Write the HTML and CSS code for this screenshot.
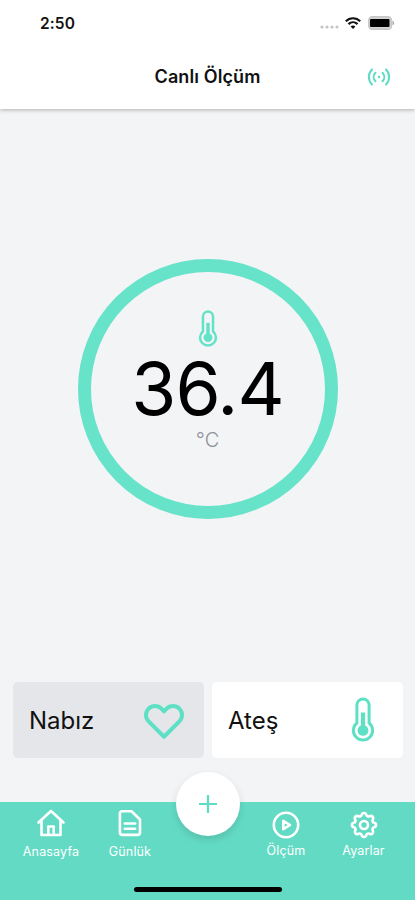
FILE: index.html
```html
<!DOCTYPE html>
<html lang="tr">
<head>
<meta charset="utf-8">
<title>Canlı Ölçüm</title>
<link rel="stylesheet" href="styles.css">
</head>
<body>
<svg width="0" height="0" class="defs">
  <symbol id="thermo" viewBox="0 0 24 46">
    <path d="M5.900 26V8a6.100 6.100 0 0 1 12.200 0v18a9.600 9.600 0 1 1-12.200 0z" fill="none" stroke="currentColor" stroke-width="3"/>
    <path d="M12 15.500v18" fill="none" stroke="currentColor" stroke-width="4.200"/>
    <circle cx="12" cy="33.400" r="5.400" fill="currentColor"/>
  </symbol>
</svg>
<div class="screen">
  <header class="header">
    <div class="status">
      <span class="time">2:50</span>
      <div class="indicators">
        <svg class="dots" width="19" height="4" viewBox="0 0 19 4" fill="#c4c4c4"><circle cx="2" cy="2" r="1.6"/><circle cx="7" cy="2" r="1.6"/><circle cx="12" cy="2" r="1.6"/><circle cx="17" cy="2" r="1.6"/></svg>
        <svg class="wifi" width="16" height="12" viewBox="0 0 16 12" fill="none" stroke="#111" stroke-width="2.200"><path d="M.8 4.300C4.800.200 11.200.200 15.200 4.300M3.500 7.100c2.600-2.500 6.400-2.500 9 0"/><path d="M8 11.900 5.600 9.500c1.400-1.300 3.400-1.300 4.800 0z" fill="#111" stroke="none"/></svg>
        <svg width="27" height="14" viewBox="0 0 27 14"><rect x=".7" y=".7" width="22.800" height="12.600" rx="3.600" fill="#d4d4d4" stroke="#c6c6c6" stroke-width="1.400"/><rect x="2" y="3" width="19.500" height="8" rx="1" fill="#000"/><path d="M24.500 4.700c2.200.7 2.200 3.900 0 4.600z" fill="#aaa"/></svg>
      </div>
    </div>
    <div class="titlebar">
      <h1>Canlı Ölçüm</h1>
      <svg class="live" width="24" height="18" viewBox="0 0 24 18" fill="none" stroke="currentColor" stroke-width="2" stroke-linecap="round"><path d="M5 1.500c-4.200 4.200-4.200 10.800 0 15M8.500 4.800c-2.400 2.400-2.400 6 0 8.400M19 1.500c4.200 4.200 4.200 10.800 0 15M15.500 4.800c2.400 2.400 2.400 6 0 8.400"/><circle cx="12" cy="9" r="1.300" fill="currentColor" stroke="none"/></svg>
    </div>
  </header>
  <main class="main">
    <div class="gauge">
      <svg class="gauge-icon" width="20" height="38"><use href="#thermo"/></svg>
      <div class="value">36.4</div>
      <div class="unit">°C</div>
    </div>
  </main>
  <div class="cards">
    <div class="card selected"><span>Nabız</span>
      <svg class="heart" width="48" height="48" viewBox="0 0 24 24" fill="none" stroke="currentColor" stroke-width="2" stroke-linejoin="round"><path d="M4.318 6.318a4.500 4.500 0 0 0 0 6.364L12 20.364l7.682-7.682a4.500 4.500 0 0 0-6.364-6.364L12 7.636l-1.318-1.318a4.500 4.500 0 0 0-6.364 0z"/></svg>
    </div>
    <div class="card"><span>Ateş</span>
      <svg class="thermo" width="24" height="46"><use href="#thermo"/></svg>
    </div>
  </div>
  <nav class="nav">
    <div class="item home">
      <svg width="30" height="30" viewBox="0 0 30 30"><path d="M2.500 14.500 15 3l12.500 11.500M5.500 12.500V27h19V12.500M12.300 27v-8.500h5.400V27"/></svg>
      <span>Anasayfa</span>
    </div>
    <div class="item diary">
      <svg width="30" height="30" viewBox="0 0 30 30"><path d="M7 3.200h9.500L25 11.500v12.800a2.600 2.600 0 0 1-2.600 2.600H7.500a2.600 2.600 0 0 1-2.600-2.600V5.300A2.100 2.100 0 0 1 7 3.200zM9.800 15.500h10.400M9.800 20.800h10.400"/></svg>
      <span>Günlük</span>
    </div>
    <div class="slot"><button class="fab" aria-label="Ekle"><svg width="20" height="20" viewBox="0 0 20 20" fill="none" stroke="currentColor" stroke-width="2.200"><path d="M10 1v18M1 10h18"/></svg></button></div>
    <div class="item measure">
      <svg width="30" height="30" viewBox="0 0 30 30"><circle cx="15" cy="15" r="12.200"/><path d="M12.300 10.800v8.400l6.700-4.200z"/></svg>
      <span>Ölçüm</span>
    </div>
    <div class="item settings">
      <svg width="32" height="32" viewBox="0 0 24 24"><path class="cog" d="M10.325 4.317c.426-1.756 2.924-1.756 3.350 0a1.724 1.724 0 0 0 2.573 1.066c1.543-.94 3.310.826 2.370 2.370a1.724 1.724 0 0 0 1.065 2.572c1.756.426 1.756 2.924 0 3.350a1.724 1.724 0 0 0-1.066 2.573c.940 1.543-.826 3.310-2.370 2.370a1.724 1.724 0 0 0-2.572 1.065c-.426 1.756-2.924 1.756-3.350 0a1.724 1.724 0 0 0-2.573-1.066c-1.543.940-3.310-.826-2.370-2.370a1.724 1.724 0 0 0-1.065-2.572c-1.756-.426-1.756-2.924 0-3.350a1.724 1.724 0 0 0 1.066-2.573c-.940-1.543.826-3.310 2.370-2.370.996.608 2.296.070 2.572-1.065z"/><circle class="cog" cx="12" cy="12" r="3"/></svg>
      <span>Ayarlar</span>
    </div>
    <div class="indicator"></div>
  </nav>
</div>
</body>
</html>
```
FILE: styles.css
```css
* { box-sizing: border-box; }
body { margin: 0; font-family: Inter, "Liberation Sans", sans-serif; color: #111; }
svg { display: block; flex: none; }
.defs { position: absolute; }
.screen { width: 415px; height: 900px; display: flex; flex-direction: column; background: #f3f4f6; overflow: hidden; }
.header { height: 109px; flex: none; background: #fff; box-shadow: 0 1px 4px rgba(0,0,0,.28); }
.status { height: 46px; padding: 0 20px 0 40px; display: flex; align-items: center; justify-content: space-between; }
.time { font-size: 15.5px; font-weight: 600; letter-spacing: .1px; }
.indicators { display: flex; align-items: center; }
.dots { margin: 8px 6px 0 0; }
.wifi { margin-right: 7px; }
.titlebar { height: 62px; padding: 0 24px; display: grid; grid-template-columns: 24px 1fr 24px; align-items: center; }
h1 { grid-column: 2; margin: 0; text-align: center; font-size: 18px; line-height: 24px; font-weight: 600; letter-spacing: .1px; }
.live { color: #5edbc3; }
.main { height: 572.5px; flex: none; padding-top: 150px; }
.gauge { width: 260px; height: 260px; margin: 0 auto; border: 13px solid #67e3ca; border-radius: 50%; display: flex; flex-direction: column; align-items: center; padding-top: 38px; color: #64e2c8; }
.value { margin-top: 5px; font-size: 73px; line-height: 72px; letter-spacing: -.9px; color: #000; }
.unit { margin-top: 3px; font-size: 20px; line-height: 24px; font-weight: 300; color: #8e9299; }
.cards { display: grid; grid-template-columns: 191px 191px; column-gap: 8px; padding-left: 13px; height: 120.5px; flex: none; }
.card { height: 76.5px; border-radius: 5px; background: #fff; display: flex; align-items: center; justify-content: space-between; padding: 0 16px; font-size: 24px; color: #5ee0c5; }
.card span { color: #111; padding-top: 2px; }
.thermo { margin-right: 12px; }
.nav { height: 98px; flex: none; background: #63dbc4; display: grid; grid-template-columns: 102px 54px 104px 52px 103px; position: relative; }
.item { display: flex; flex-direction: column; align-items: center; padding-top: 6px; color: #fff; font-size: 12.5px; line-height: 16px; white-space: nowrap; }
.item svg { fill: none; stroke: currentColor; stroke-width: 2.6; stroke-linejoin: round; stroke-linecap: round; }
.item svg .cog { stroke-width: 2; }
.item span { margin-top: 6px; letter-spacing: .15px; }
.diary { padding-left: 2px; }
.measure, .settings { padding-top: 8px; }
.measure span { margin-top: 3px; }
.settings { padding-top: 7px; }
.settings span { margin-top: 2px; }
.slot { display: flex; justify-content: center; }
.fab { width: 64px; height: 64px; margin-top: -30px; padding: 0; border: 0; border-radius: 50%; background: #fff; color: #5edbc3; display: flex; align-items: center; justify-content: center; box-shadow: 0 4px 8px rgba(0,0,0,.12); }
.indicator { position: absolute; left: 134px; bottom: 8px; width: 148px; height: 5px; border-radius: 3px; background: #000; }
.selected { background: #e5e6ea; }
```
